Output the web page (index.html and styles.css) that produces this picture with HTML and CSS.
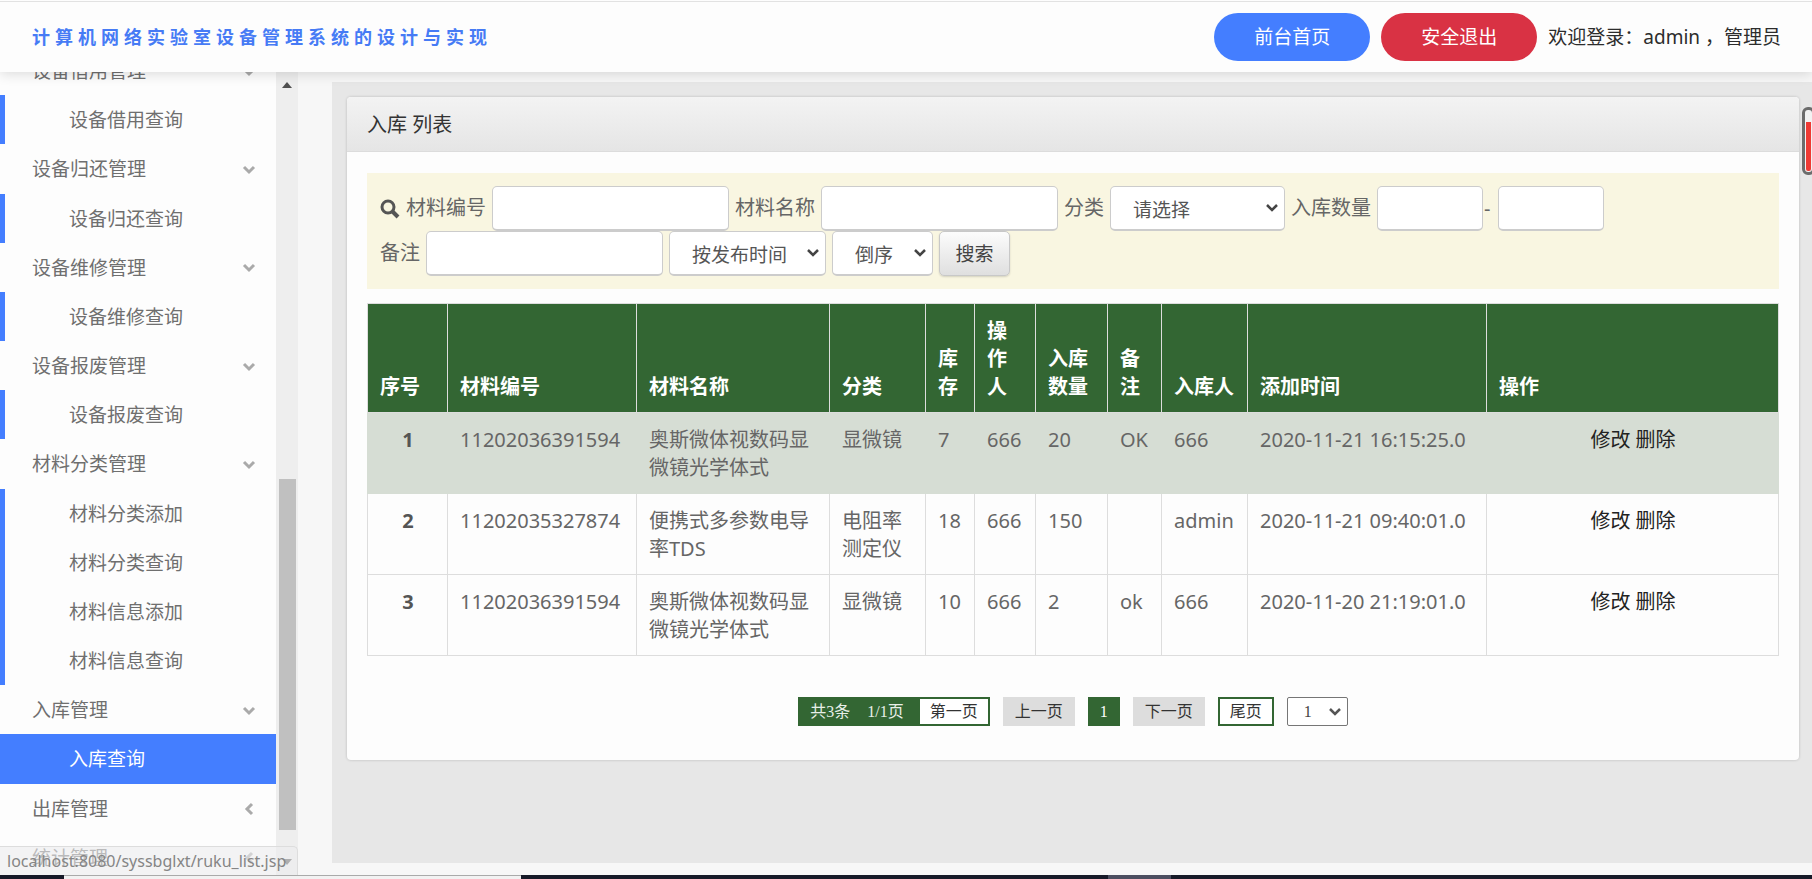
FILE: index.html
```html
<!DOCTYPE html>
<html lang="zh-CN">
<head>
<meta charset="utf-8">
<title>入库 列表</title>
<link rel="stylesheet" href="styles.css">
</head>
<body>
<svg class="defs" aria-hidden="true">
  <symbol id="down" viewBox="0 0 14 10"><path d="M2 2l5 5 5-5" fill="none" stroke="currentColor" stroke-width="3"/></symbol>
  <symbol id="left" viewBox="0 0 10 14"><path d="M8 2L3 7l5 5" fill="none" stroke="currentColor" stroke-width="3"/></symbol>
</svg>
<header class="topbar">
  <h1 class="brand">计算机网络实验室设备管理系统的设计与实现</h1>
  <div class="user">
    <a class="pill pill-blue" href="#">前台首页</a>
    <a class="pill pill-red" href="#">安全退出</a>
    <span>欢迎登录：admin ，管理员</span>
  </div>
</header>
<div class="layout">
  <nav class="side">
    <ul class="menu">
      <li><a class="group" href="#">设备借用管理<svg class="chev"><use href="#down"/></svg></a></li>
      <li><a class="sub" href="#">设备借用查询</a></li>
      <li><a class="group" href="#">设备归还管理<svg class="chev"><use href="#down"/></svg></a></li>
      <li><a class="sub" href="#">设备归还查询</a></li>
      <li><a class="group" href="#">设备维修管理<svg class="chev"><use href="#down"/></svg></a></li>
      <li><a class="sub" href="#">设备维修查询</a></li>
      <li><a class="group" href="#">设备报废管理<svg class="chev"><use href="#down"/></svg></a></li>
      <li><a class="sub" href="#">设备报废查询</a></li>
      <li><a class="group" href="#">材料分类管理<svg class="chev"><use href="#down"/></svg></a></li>
      <li><a class="sub" href="#">材料分类添加</a></li>
      <li><a class="sub" href="#">材料分类查询</a></li>
      <li><a class="sub" href="#">材料信息添加</a></li>
      <li><a class="sub" href="#">材料信息查询</a></li>
      <li><a class="group" href="#">入库管理<svg class="chev"><use href="#down"/></svg></a></li>
      <li><a class="sub active" href="#">入库查询</a></li>
      <li><a class="group" href="#">出库管理<svg class="chev"><use href="#left"/></svg></a></li>
      <li><a class="group" href="#">统计管理<svg class="chev"><use href="#left"/></svg></a></li>
    </ul>
  </nav>
  <div class="scroll" aria-hidden="true">
    <svg viewBox="0 0 10 6"><path d="M0 6l5-6 5 6z" fill="#505050"/></svg>
    <i class="thumb"></i>
    <svg class="last" viewBox="0 0 10 6"><path d="M0 0l5 6 5-6z" fill="#505050"/></svg>
  </div>
  <main class="content">
    <section class="card">
      <h2 class="card-title">入库 列表</h2>
      <div class="card-body">
        <form class="filter">
          <div class="field">
            <svg class="search" viewBox="0 0 20 20"><circle cx="8" cy="8" r="6" fill="none" stroke="#555" stroke-width="3"/><path d="M12 12l6 6" stroke="#555" stroke-width="4"/></svg>
            <label for="code">材料编号</label><input id="code" class="box" type="text">
          </div>
          <div class="field"><label for="name">材料名称</label><input id="name" class="box" type="text"></div>
          <div class="field"><label for="kind">分类</label><select id="kind" class="box wide"><option>请选择</option></select></div>
          <div class="field"><label for="min">入库数量</label><span class="range"><input id="min" class="box short" type="text"><span class="dash">-</span><input class="box short" type="text" aria-label="入库数量上限"></span></div>
          <div class="field"><label for="note">备注</label><input id="note" class="box" type="text"></div>
          <select class="box mid" aria-label="排序字段"><option>按发布时间</option></select>
          <select class="box narrow" aria-label="排序方式"><option>倒序</option></select>
          <button class="go" type="button">搜索</button>
        </form>
        <table class="list">
          <colgroup><col class="c1"><col class="c2"><col class="c3"><col class="c4"><col class="c5"><col class="c6"><col class="c7"><col class="c8"><col class="c9"><col class="c10"><col></colgroup>
          <thead>
            <tr><th>序号</th><th>材料编号</th><th>材料名称</th><th>分类</th><th>库存</th><th>操作人</th><th>入库数量</th><th>备注</th><th>入库人</th><th>添加时间</th><th>操作</th></tr>
          </thead>
          <tbody>
            <tr class="hover"><td class="no">1</td><td>11202036391594</td><td>奥斯微体视数码显微镜光学体式</td><td>显微镜</td><td>7</td><td>666</td><td>20</td><td>OK</td><td>666</td><td class="time">2020-11-21 16:15:25.0</td><td class="ops"><a href="#">修改</a> <a href="#">删除</a></td></tr>
            <tr><td class="no">2</td><td>11202035327874</td><td>便携式多参数电导率TDS</td><td>电阻率测定仪</td><td>18</td><td>666</td><td>150</td><td></td><td>admin</td><td class="time">2020-11-21 09:40:01.0</td><td class="ops"><a href="#">修改</a> <a href="#">删除</a></td></tr>
            <tr><td class="no">3</td><td>11202036391594</td><td>奥斯微体视数码显微镜光学体式</td><td>显微镜</td><td>10</td><td>666</td><td>2</td><td>ok</td><td>666</td><td class="time">2020-11-20 21:19:01.0</td><td class="ops"><a href="#">修改</a> <a href="#">删除</a></td></tr>
          </tbody>
        </table>
        <div class="pager">
          <div class="joined"><span class="total"><span>共3条</span><span>1/1页</span></span><a class="edge" href="#">第一页</a></div>
          <a class="step" href="#">上一页</a>
          <a class="current" href="#">1</a>
          <a class="step" href="#">下一页</a>
          <a class="edge" href="#">尾页</a>
          <select class="jump" aria-label="页码"><option>1</option></select>
        </div>
      </div>
    </section>
  </main>
  <i class="gauge" aria-hidden="true"></i>
  <div class="status">localhost:8080/syssbglxt/ruku_list.jsp</div>
</div>
<footer class="taskbar"><i class="start"></i><i class="field-strip"></i><i class="tasks"></i><i class="task-on"></i><i class="tasks-rest"></i></footer>
</body>
</html>
```

FILE: styles.css
```css
* { box-sizing: border-box; }
body {
  margin: 0;
  height: 100vh;
  display: grid;
  grid-template-rows: 72px minmax(0, 1fr) 4px;
  overflow: hidden;
  background: #f7f7f7;
  color: #666;
  font: 20px/28px "Noto Sans", "Noto Sans CJK SC", sans-serif;
}
a { color: inherit; text-decoration: none; }
i { display: block; }
.defs { position: absolute; width: 0; height: 0; }

.topbar {
  display: flex;
  align-items: center;
  justify-content: space-between;
  padding: 2px 31px 0 32px;
  background: linear-gradient(#e2e2e2, #e2e2e2) 0 1px / 100% 1px no-repeat #fdfdfd;
  box-shadow: 0 2px 12px rgba(0, 0, 0, .14);
  z-index: 2;
}
.brand {
  margin: 0;
  font-size: 18px;
  line-height: 28px;
  letter-spacing: 5px;
  color: #467bf5;
}
.user {
  display: flex;
  align-items: center;
  gap: 11px;
  font-size: 19px;
  color: #2c2c2c;
}
.pill {
  padding: 10px 40px;
  border-radius: 24px;
  color: #fff;
}
.pill-blue { background: #447eff; }
.pill-red { background: #d93244; }

.layout {
  position: relative;
  display: grid;
  grid-template-columns: 276px 22px minmax(0, 1fr);
  min-height: 0;
}
.side { overflow: hidden; background: #fdfdfd; }
.menu {
  list-style: none;
  display: grid;
  grid-auto-rows: 1fr;
  height: 836px;
  margin: -26px 0 0;
  padding: 0;
  font-size: 19px;
  line-height: 47px;
  color: #6f6f6f;
}
.group {
  display: flex;
  align-items: center;
  justify-content: space-between;
  height: 100%;
  padding: 2px 20px 0 32px;
}
.chev { width: 14px; height: 14px; color: #aaa; }
.sub {
  display: block;
  height: 100%;
  padding: 2px 0 0 64px;
  border-left: 5px solid #447eff;
}
.sub.active { background: #447eff; color: #fff; }

.scroll {
  display: grid;
  grid-template-rows: 26px 381fr 351fr 19fr 26px;
  justify-items: center;
  align-items: center;
  background: #eee;
}
.scroll svg { width: 10px; height: 6px; }
.scroll .thumb { grid-row: 3; width: 17px; height: 100%; background: #c0c0c0; }
.scroll .last { grid-row: 5; }

.content {
  margin: 10px 0 12px 34px;
  padding: 15px 13px 0 15px;
  background: #e7e7e7;
}
.card {
  background: #fdfdfd;
  border-radius: 4px;
  box-shadow: 0 0 3px rgba(0, 0, 0, .2);
}
.card-title {
  margin: 0;
  padding: 14px 20px 12px;
  border-bottom: 1px solid #dcdcdc;
  border-radius: 4px 4px 0 0;
  background: linear-gradient(#f3f3f3, #e5e5e5);
  font-size: 20px;
  font-weight: 400;
  line-height: 28px;
  color: #333;
}
.card-body { padding: 21px 20px 34px; }

.filter {
  display: flex;
  flex-wrap: wrap;
  column-gap: 6px;
  padding: 13px;
  background: #f9f6e1;
}
.field { display: flex; align-items: center; gap: 6px; }
.field label { padding-bottom: 2px; }
.search { width: 20px; height: 20px; }
.box {
  width: 237px;
  height: 45px;
  padding: 0 12px;
  border: 1px solid #ccc;
  border-bottom-width: 2px;
  border-radius: 5px;
  background: #fff;
  color: #555;
  font: inherit;
}
select {
  appearance: none;
}
select.box {
  padding: 3px 28px 0 22px;
  font-size: 19px;
  background: #fff url("data:image/svg+xml,%3Csvg xmlns='http://www.w3.org/2000/svg' width='14' height='10'%3E%3Cpath d='M2 2l5 5 5-5' fill='none' stroke='%23444' stroke-width='2.5'/%3E%3C/svg%3E") no-repeat right 5px center;
}
.wide { width: 175px; }
select.mid { width: 157px; }
select.narrow { width: 101px; }
.range { display: flex; align-items: center; }
.short { width: 106px; }
.dash { width: 15px; padding-left: 1px; }
.go {
  width: 71px;
  height: 45px;
  border: 1px solid #c8c8c8;
  border-radius: 5px;
  background: linear-gradient(#fcfcfc, #dfdfdf);
  box-shadow: 0 1px 2px rgba(0, 0, 0, .15);
  color: #444;
  font: inherit;
  font-size: 19px;
}

.list {
  width: 100%;
  margin-top: 14px;
  table-layout: fixed;
  border-collapse: collapse;
}
.list th, .list td {
  padding: 13px 11px 11px 12px;
  border: 1px solid #ddd;
  text-align: left;
  vertical-align: top;
}
.list th { vertical-align: bottom; background: #336633; color: #fff; }
.list .hover td { background: #d6ddd4; border-color: #d6ddd4; }
.list .no { text-align: center; font-weight: 700; color: #555; }
.list .time { white-space: nowrap; }
.list .ops { text-align: center; color: #222; }
.c1 { width: 80px; }
.c2 { width: 189px; }
.c3 { width: 193px; }
.c4 { width: 96px; }
.c5 { width: 49px; }
.c6 { width: 61px; }
.c7 { width: 72px; }
.c8 { width: 54px; }
.c9 { width: 86px; }
.c10 { width: 239px; }

.pager {
  display: flex;
  justify-content: center;
  gap: 13px;
  margin-top: 41px;
  color: #333;
  font: 16px/25px "Liberation Serif", "Noto Sans CJK SC", serif;
}
.joined { display: flex; }
.total {
  display: flex;
  gap: 17px;
  padding: 2px 14px 2px 12px;
  background: #336633;
  color: #e8efe8;
}
.edge { padding: 0 10px; border: 2px solid #336633; background: #fff; }
.step { padding: 2px 12px; background: #ddd; }
.current { padding: 2px 12px; background: #336633; color: #fff; }
.jump {
  width: 61px;
  height: 29px;
  padding: 0 16px;
  border: 1px solid #767676;
  border-radius: 2px;
  background: #fff url("data:image/svg+xml,%3Csvg xmlns='http://www.w3.org/2000/svg' width='14' height='10'%3E%3Cpath d='M2 2l5 5 5-5' fill='none' stroke='%23555' stroke-width='2.5'/%3E%3C/svg%3E") no-repeat right 5px center;
  color: #444;
  font: inherit;
}

.gauge {
  position: absolute;
  top: 35px;
  right: -3px;
  width: 13px;
  height: 68px;
  padding: 12px 1px 1px;
  border: 3px solid #6c6c6c;
  border-radius: 6px;
  background:
    linear-gradient(#ee3a34, #ee3a34) content-box,
    #f2f2f2;
}
.status {
  position: absolute;
  left: 0;
  bottom: 0;
  padding: 1px 11px 1px 7px;
  border: 1px solid #ddd;
  border-width: 1px 1px 0 0;
  border-radius: 0 5px 0 0;
  background: rgba(236, 236, 238, .6);
  color: #858585;
  font-size: 16px;
  line-height: 26px;
}
.taskbar {
  display: grid;
  grid-template-columns: 64fr 457fr 587fr 63fr 641fr;
  background: #171a28;
}
.field-strip { background: #f2f2f2; border-top: 1px solid #aaa; }
.task-on { background: #4c4e60; }
```
